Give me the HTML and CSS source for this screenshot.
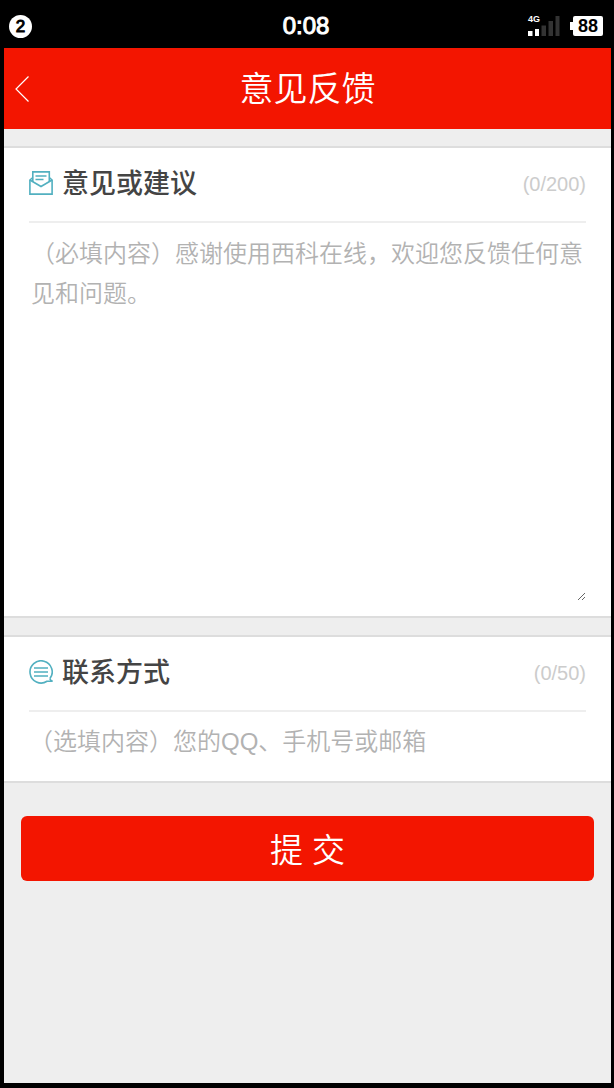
FILE: index.html
```
<!DOCTYPE html>
<html lang="zh-CN">
<head>
<meta charset="utf-8">
<meta name="viewport" content="width=device-width, initial-scale=1">
<title>意见反馈</title>
<link rel="stylesheet" href="styles.css">
</head>
<body>
<div class="status-bar">
  <div class="status-left"><span class="notice-count">2</span></div>
  <time class="clock">0:08</time>
  <div class="status-right">
    <div class="signal">
      <span class="network">4G</span>
      <svg width="32" height="20" viewBox="0 0 32 20" aria-hidden="true">
        <path fill="#fff" d="M0 15h4.500v5H0zM7 13h4v7H7z"/>
        <path fill="#333" d="M13.500 9.500h4.500v10.500h-4.500zM20.500 5h4.500v15h-4.500zM27.500 0h4v20h-4z"/>
      </svg>
    </div>
    <span class="battery">88</span>
  </div>
</div>
<header class="title-bar">
  <button class="back" type="button" aria-label="返回">
    <svg width="14" height="26" viewBox="0 0 14 26" aria-hidden="true"><path d="M13.500 .5L1 13l12.500 12.500" fill="none" stroke="#fff" stroke-width="1.200"/></svg>
  </button>
  <h1 class="title">意见反馈</h1>
</header>
<form class="feedback">
  <section class="card">
    <div class="card-head">
      <svg class="card-icon" width="24" height="24" viewBox="0 0 24 24" aria-hidden="true">
        <g fill="none" stroke="#52b0c0" stroke-width="1.600">
          <path d="M3.800 11V.9h16.500V11"/>
          <path d="M3.800 6.500L.9 9v14.100h22.200V9L20.300 6.500"/>
          <path d="M.9 9L12 15.500 23.100 9"/>
          <path d="M6.500 5h11M6.500 8.500h8"/>
        </g>
      </svg>
      <label class="card-label" for="opinion">意见或建议</label>
      <span class="counter">(0/200)</span>
    </div>
    <textarea class="field field-large" id="opinion" maxlength="200" placeholder="（必填内容）感谢使用西科在线，欢迎您反馈任何意见和问题。"></textarea>
  </section>
  <section class="card">
    <div class="card-head">
      <svg class="card-icon" width="24" height="24" viewBox="0 0 24 24" aria-hidden="true">
        <g fill="none" stroke="#52b0c0" stroke-width="1.600">
          <path d="M20.800 18.800A11.100 11.100 0 1 0 18 21.300L23.600 21.200Q21.500 20.500 20.800 18.800"/>
          <path d="M5 8h14M5 12h14M5 16h14"/>
        </g>
      </svg>
      <label class="card-label" for="contact">联系方式</label>
      <span class="counter">(0/50)</span>
    </div>
    <input class="field" id="contact" type="text" maxlength="50" placeholder="（选填内容）您的QQ、手机号或邮箱">
  </section>
  <button class="submit" type="button">提 交</button>
</form>
</body>
</html>
```
FILE: styles.css
```
* {
  box-sizing: border-box;
}

body {
  margin: 0;
  min-height: 100vh;
  display: flex;
  flex-direction: column;
  border: solid #000;
  border-width: 0 3px 5px 4px;
  background: #eee;
  color: #444;
  font-family: "Liberation Sans", "Noto Sans CJK SC", sans-serif;
}

.status-bar {
  display: grid;
  grid-template-columns: 1fr auto 1fr;
  align-items: center;
  height: 48px;
  padding: 4px 8px 0 5px;
  background: #000;
  color: #fff;
}

.status-left {
  display: flex;
}

.notice-count {
  width: 23px;
  border-radius: 50%;
  background: #fff;
  color: #000;
  font-size: 17px;
  line-height: 23px;
  text-align: center;
  -webkit-text-stroke: 1px #000;
}

.clock {
  font-size: 24px;
  line-height: 28px;
  -webkit-text-stroke: 1px #fff;
}

.status-right {
  display: flex;
  justify-content: flex-end;
  align-items: center;
  gap: 10px;
}

.signal {
  position: relative;
  display: flex;
}

.network {
  position: absolute;
  top: -2px;
  left: 0;
  font-size: 9px;
  font-weight: bold;
  line-height: 11px;
}

.battery {
  position: relative;
  width: 30px;
  border-radius: 2px;
  margin-left: 3px;
  background: #fff;
  color: #000;
  font-size: 18px;
  font-weight: bold;
  line-height: 20px;
  text-align: center;
}

.battery::before {
  content: "";
  position: absolute;
  top: 6px;
  left: -3px;
  width: 3px;
  height: 8px;
  background: #fff;
}

.title-bar {
  display: grid;
  grid-template-columns: 48px 1fr 48px;
  align-items: center;
  height: 81px;
  background: #f31500;
  color: #fff;
}

.back {
  display: flex;
  padding: 12px 11px;
  border: 0;
  background: none;
}

.title {
  margin: 0;
  font-size: 34px;
  font-weight: 350;
  line-height: 48px;
  text-align: center;
}

.feedback {
  display: flex;
  flex-direction: column;
}

.card {
  margin-top: 17px;
  padding: 0 25px;
  border: solid #ddd;
  border-width: 2px 0;
  background: #fff;
}

.card-head {
  display: flex;
  align-items: center;
  height: 75px;
  padding-bottom: 2px;
  border-bottom: 2px solid #eee;
}

.card-icon {
  margin: 0 9px 2px 0;
}

.card-label {
  font-size: 27px;
  font-weight: 500;
  line-height: 40px;
}

.counter {
  margin-left: auto;
  color: #ccc;
  font-size: 20px;
  line-height: 24px;
}

.field {
  display: block;
  width: 100%;
  height: 69px;
  padding: 0 0 9px;
  border: 0;
  outline: 0;
  background: none;
  color: #444;
  font-family: "Liberation Sans", "Noto Sans CJK SC", sans-serif;
  font-size: 24px;
  font-weight: 350;
  line-height: 40px;
}

.field::placeholder {
  color: #b2b2b2;
}

.field-large {
  height: 378px;
  margin-bottom: 15px;
  padding: 11px 2px;
  resize: vertical;
}

.submit {
  height: 65px;
  margin: 33px 17px;
  padding: 0 0 2px;
  border: 0;
  border-radius: 6px;
  background: #f31500;
  color: #fff;
  font-family: "Liberation Sans", "Noto Sans CJK SC", sans-serif;
  font-size: 33px;
  font-weight: 350;
}
```
